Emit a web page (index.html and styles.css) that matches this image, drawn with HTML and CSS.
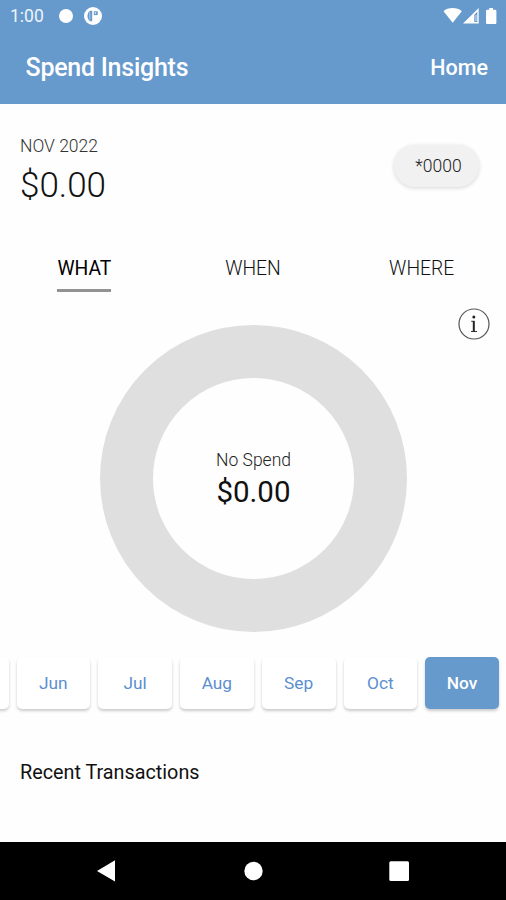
FILE: index.html
```html
<!DOCTYPE html>
<html lang="en">
<head>
<meta charset="utf-8">
<title>Spend Insights</title>
<link rel="stylesheet" href="styles.css">
</head>
<body>
<div class="screen">
  <header class="top">
    <div class="status">
      <span class="clock">1:00</span>
      <span class="dot"></span>
      <svg class="notice" viewBox="0 0 18 18"><circle cx="9" cy="9" r="9" fill="#fff"/><path d="M8.200 3.800H6.500Q3.500 5 3.500 9T6.500 14.200H8.200Z" fill="#6699cc"/><path d="M5.800 5.500v7" stroke="#fff" stroke-width="1" opacity=".5"/><path d="M9.800 4.300h3.900v3.800H9.800Z" fill="#6699cc"/><circle cx="11.400" cy="6" r=".8" fill="#fff"/></svg>
      <svg class="signals" viewBox="0 0 56 18"><path d="M.5 3.300C4.500-1 14.500-1 18.800 3.300L9.700 14.800Z" fill="#fff"/><path d="M20 15.500 35.700 0V15.500Z" fill="#fff"/><path d="M31.300 6.700 34.300 3.700V14H31.300Z" fill="#6699cc"/><path d="M32.500 7h1v6h-1z" fill="#fff" opacity=".7"/><path d="M46.200 0h3.800v1.700h2.200q1.200 0 1.200 1.200v11.800q0 1.200-1.200 1.200h-8q-1.200 0-1.200-1.200V2.900q0-1.200 1.200-1.200h2Z" fill="#fff"/></svg>
    </div>
    <div class="bar"><h1 class="title">Spend Insights</h1><a class="home">Home</a></div>
  </header>
  <section class="summary">
    <div><div class="period">NOV 2022</div><div class="total">$0.00</div></div>
    <button class="card">*0000</button>
  </section>
  <nav class="tabs">
    <span class="tab active">WHAT</span>
    <span class="tab when">WHEN</span>
    <span class="tab where">WHERE</span>
  </nav>
  <div class="inforow"><svg class="info" viewBox="0 0 32 32"><circle cx="16" cy="16" r="15" fill="none" stroke="#555" stroke-width="1.200"/><circle cx="15.800" cy="9" r="1.500" fill="#222"/><path d="M13.200 13.300h2.600M13 23.500h6" fill="none" stroke="#333" stroke-width="1"/><path d="M14.800 12.900h2v10.600h-2z" fill="#222"/></svg></div>
  <div class="chart">
    <div class="ring"><span class="none">No Spend</span><span class="amount">$0.00</span></div>
  </div>
  <div class="months">
    <span class="month"></span><span class="month">Jun</span><span class="month">Jul</span><span class="month">Aug</span><span class="month">Sep</span><span class="month">Oct</span><span class="month current">Nov</span>
  </div>
  <h2 class="recent">Recent Transactions</h2>
  <footer class="navbar">
    <svg class="navicons" viewBox="0 0 506 58"><path d="M97 29 115 18.200V39.500Z" fill="#fff"/><circle cx="253.500" cy="29" r="9.200" fill="#fff"/><rect x="389.300" y="19.300" width="19.700" height="19.700" rx="1.500" fill="#fff"/></svg>
  </footer>
</div>
</body>
</html>
```
FILE: styles.css
```css
* { box-sizing: border-box; }
body { margin: 0; background: #fefefe; font-family: Roboto, sans-serif; color: #111; }
.screen { width: 506px; height: 900px; overflow: hidden; display: flex; flex-direction: column; }
.top { height: 104px; flex: none; background: #6699cc; color: #fff; }
.status { height: 32px; display: flex; align-items: center; padding-left: 10px; }
.clock { font-size: 17.5px; width: 49px; line-height: 32px; color: #edf4fb; }
.dot { width: 14px; height: 14px; border-radius: 50%; background: #fff; }
.notice { width: 18px; height: 18px; margin-left: 11px; }
.signals { width: 56px; height: 18px; margin: 1px 7px 0 auto; }
.bar { height: 72px; display: flex; justify-content: space-between; padding: 20px 18px 0 25.5px; }
.title { margin: 0; font-size: 25px; line-height: 32px; font-weight: 500; letter-spacing: -.25px; }
.home { font-size: 21.5px; line-height: 32px; font-weight: 500; }
.summary { height: 147px; flex: none; display: flex; justify-content: space-between; padding: 32px 27px 0 20px; }
.period { font-size: 17.5px; line-height: 21px; color: #333; font-weight: 350; }
.total { font-size: 35px; line-height: 42px; margin-top: 8px; font-weight: 350; }
.card { width: 85px; height: 42px; margin-top: 9px; padding: 0 0 0 4px; border: 0; border-radius: 21px; background: #f1f1f1; box-shadow: 0 1px 4px rgba(0,0,0,.16); font: 350 17.5px Roboto, sans-serif; color: #222; }
.tabs { height: 57px; flex: none; display: grid; grid-template-columns: repeat(3, 1fr); justify-items: center; align-items: start; padding-top: 6px; }
.tab { font-size: 19.3px; line-height: 24px; height: 35px; color: #111; font-weight: 350; }
.active { font-weight: 400; color: #000; border-bottom: 3px solid #929292; }
.inforow { height: 17px; flex: none; display: flex; justify-content: flex-end; padding-right: 16px; }
.info { width: 32px; height: 32px; flex: none; }
.chart { height: 332px; flex: none; display: flex; justify-content: center; }
.ring { width: 307px; height: 307px; border: 53.5px solid #dfdfdf; border-radius: 50%; display: flex; flex-direction: column; align-items: center; padding-top: 71px; margin-left: 1px; }
.none { font-size: 17.5px; line-height: 22px; font-weight: 350; color: #222; }
.amount { font-size: 29.5px; line-height: 36px; margin-top: 3px; }
.months { height: 54px; flex: none; display: flex; justify-content: flex-end; gap: 8px; padding-right: 7px; }
.month { width: 73.75px; height: 52px; flex: none; border-radius: 5px; background: #fff; color: #5b8fd0; font-size: 17.3px; line-height: 53px; text-align: center; box-shadow: 0 2px 3px rgba(0,0,0,.2); }
.current { background: #6699cc; color: #fff; font-weight: 500; }
.recent { margin: 0; flex: none; height: 131px; padding: 50px 20px 0; font-size: 19.8px; line-height: 24px; font-weight: 400; }
.navbar { height: 58px; flex: none; background: #000; }
.navicons { display: block; width: 506px; height: 58px; }
```
